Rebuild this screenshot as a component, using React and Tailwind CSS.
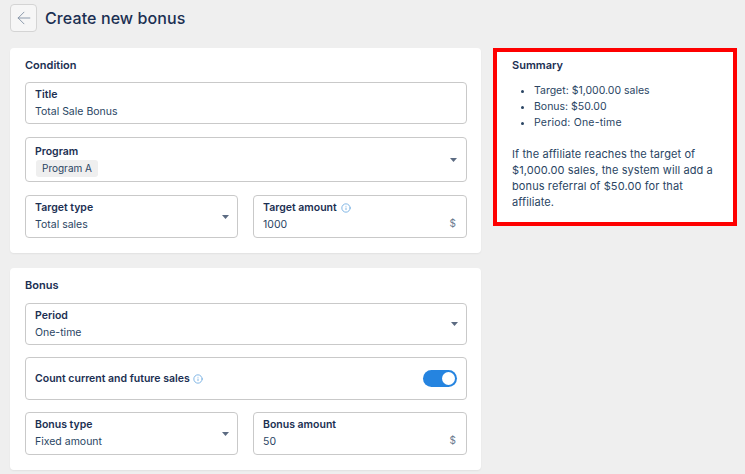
import React from "react";
import { ArrowLeft, Info } from "lucide-react";

const FONT = "font-['Inter','Noto_Sans',sans-serif]";

function Caret() {
  return (
    <svg width="7" height="4" viewBox="0 0 7 4" className="shrink-0">
      <path d="M0 0h7L3.5 4z" fill="#5c6b82" />
    </svg>
  );
}

function Field({ label, value, hint, caret, suffix, className = "h-[43px]" }) {
  return (
    <div className={`relative flex flex-col justify-center rounded border border-[#c9c9c9] bg-white px-[9px] ${className}`}>
      <div className="flex items-center gap-[4px] text-[10.5px] leading-[16px] font-semibold text-[#1b2f52]">
        {label}
        {hint && <Info size={10} className="text-[#6aa8e0]" />}
      </div>
      <div className="text-[10.5px] leading-[17px] text-[#2a4563]">{value}</div>
      {caret && (
        <div className="absolute right-[8px] top-1/2 -translate-y-1/2">
          <Caret />
        </div>
      )}
      {suffix && <div className="absolute right-[10px] bottom-[5px] text-[10px] leading-[17px] text-[#6b7c90]">{suffix}</div>}
    </div>
  );
}

export default function App() {
  return (
    <div className={`${FONT} h-[474px] w-[745px] overflow-hidden bg-[#efefef] pl-[10px] pr-[8px] pt-[4px]`}>
      <div className="flex h-[28px] items-center gap-[8px]">
        <button className="flex h-[28px] w-[27px] items-center justify-center rounded border border-[#d4d4d4] bg-[#f6f6f6]">
          <ArrowLeft size={20} strokeWidth={1} className="text-[#77889c]" />
        </button>
        <h1 className="pb-[1px] text-[16px] leading-[22px] font-medium tracking-[0.1px] text-[#1b2f52]">Create new bonus</h1>
      </div>

      <div className="mt-[16px] flex items-start gap-[12px]">
        <div className="flex w-[471px] shrink-0 flex-col gap-[15px]">
          <section className="flex h-[205px] flex-col rounded bg-white pl-[15px] pr-[14px] pt-[9px] shadow-[0_1px_2px_rgba(0,0,0,0.06)]">
            <h2 className="mb-[8px] text-[11px] leading-[17px] font-semibold text-[#1b2f52]">Condition</h2>
            <div className="flex flex-col gap-[13px]">
              <Field label="Title" value="Total Sale Bonus" className="h-[42px]" />
              <div className="relative flex h-[45px] flex-col justify-center gap-[1px] rounded border border-[#c9c9c9] bg-white px-[9px] pt-[1px]">
                <div className="text-[10.5px] leading-[15px] font-semibold text-[#1b2f52]">Program</div>
                <div className="ml-[1px] w-fit rounded-[3px] bg-[#efefef] px-[6px] text-[10px] leading-[17px] text-[#2a4563]">Program A</div>
                <div className="absolute right-[9px] top-1/2 -translate-y-1/2">
                  <Caret />
                </div>
              </div>
              <div className="grid grid-cols-[213px_1fr] gap-[15px]">
                <Field label="Target type" value="Total sales" caret />
                <Field label="Target amount" value="1000" hint suffix="$" />
              </div>
            </div>
          </section>

          <section className="flex h-[202px] flex-col rounded bg-white pl-[15px] pr-[14px] pt-[9px] shadow-[0_1px_2px_rgba(0,0,0,0.06)]">
            <h2 className="mb-[9px] text-[11px] leading-[17px] font-semibold text-[#1b2f52]">Bonus</h2>
            <div className="flex flex-col gap-[12px]">
              <Field label="Period" value="One-time" caret className="h-[42px]" />
              <div className="flex h-[43px] items-center justify-between rounded border border-[#c9c9c9] px-[9px]">
                <div className="flex items-center gap-[3px] text-[10.5px] font-semibold text-[#1b2f52]">
                  Count current and future sales
                  <Info size={10} className="text-[#6aa8e0]" />
                </div>
                <div className="flex h-[17px] w-[34px] items-center justify-end rounded-full bg-[#2584e0] pr-[2px]">
                  <div className="h-[13px] w-[13px] rounded-full bg-white" />
                </div>
              </div>
              <div className="grid grid-cols-[213px_1fr] gap-[15px]">
                <Field label="Bonus type" value="Fixed amount" caret />
                <Field label="Bonus amount" value="50" suffix="$" />
              </div>
            </div>
          </section>
        </div>

        <aside className="h-[178px] w-[244px] shrink-0 border-[4px] border-[#fe0000] bg-white pl-[15px] pr-[14px] pt-[5px] text-[10.5px] leading-[16px] text-[#2a4563]">
          <h2 className="text-[11px] leading-[17px] font-semibold text-[#1b2f52]">Summary</h2>
          <ul className="mt-[9px] list-disc pl-[22px]">
            <li>Target: $1,000.00 sales</li>
            <li>Bonus: $50.00</li>
            <li className="tracking-[0.2px]">Period: One-time</li>
          </ul>
          <p className="mt-[15px] text-[11px] tracking-[0.1px]">
            If the affiliate reaches the target of $1,000.00 sales, the system will add a bonus referral of $50.00 for that affiliate.
          </p>
        </aside>
      </div>
    </div>
  );
}
